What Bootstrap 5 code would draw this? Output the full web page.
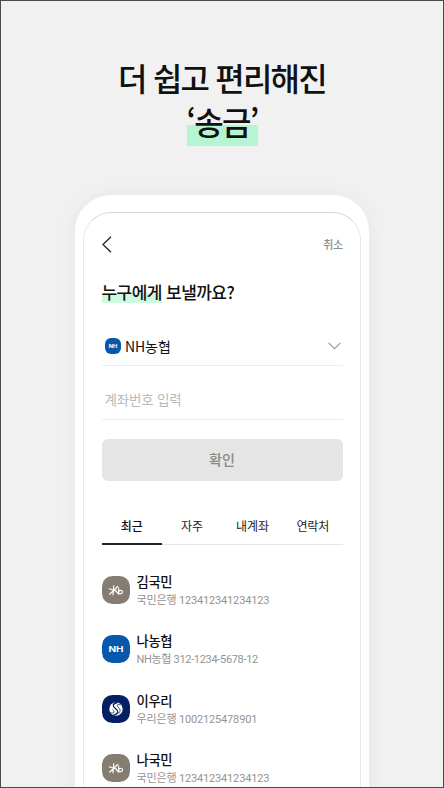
<!DOCTYPE html>
<html lang="ko">
<head>
<meta charset="utf-8">
<meta name="viewport" content="width=device-width, initial-scale=1">
<title>송금</title>
<link href="https://cdn.jsdelivr.net/npm/bootstrap@5.3.0/dist/css/bootstrap.min.css" rel="stylesheet">
<style>
body{font-family:"Noto Sans CJK KR",sans-serif;background:#f1f1f1;color:#111;}
.stage{height:788px;border:1px solid #4b494b;background:#f1f1f1;}
.hero{padding-top:54px;height:194px;font-size:32px;line-height:44px;font-weight:500;letter-spacing:-1.8px;color:#111;}
.hero-mark{background:linear-gradient(#b5f5d3,#b5f5d3) 0 25px/100% 21px no-repeat;display:inline-block;width:71px;height:46px;line-height:42px;white-space:nowrap;}
.phone{width:294px;height:640px;border-radius:36px;background:#fff;padding:17px 8px 0;margin-left:74px;box-shadow:0 2px 24px rgba(0,0,0,.05);}
.screen{height:640px;border:1px solid #e8e8e8;border-top-color:#d6d6d6;border-radius:28px;padding:0 17px 0 17.5px;}
.top-row{height:62px;}
.cancel{font-size:11px;font-weight:500;color:#8b8b8b;letter-spacing:-.2px;}
.question{height:36px;font-size:17px;font-weight:500;line-height:34px;letter-spacing:-.55px;color:#111;}
.question-mark{background:linear-gradient(#cdf9e0,#cdf9e0) 0 18px/100% 10px no-repeat;display:inline-block;}
.bank{height:37px;margin-top:18px;border-bottom:1px solid #ededed;font-size:14px;color:#111;padding:0 2px 2px 3.5px;}
.bank-name{letter-spacing:-.1px;}
.account{height:54px;border-bottom:1px solid #ededed;font-size:13.5px;line-height:20px;letter-spacing:-.2px;color:#b9b9b9;padding:23px 3px 0;}
.confirm{height:42px;margin-top:19px;border-radius:6px;background:#e5e5e5;color:#888;font-size:14px;font-weight:500;border:0;padding:0 0 2px;width:241px;}
.tabs-row{height:36px;margin-top:28px;border-bottom:1px solid #e6e6e6;font-size:12px;letter-spacing:-.1px;}
.tab-item{flex:1 1 0;height:36px;line-height:33px;color:#222;text-align:center;}
.tab-on{border-bottom:2px solid #262626;font-weight:500;color:#111;}
.person{height:59.5px;}
.person-body{margin-left:7px;padding-top:4px;}
.person-name{font-size:13.3px;line-height:18px;font-weight:500;color:#111;letter-spacing:-.3px;}
.person-acct{font-family:Roboto,"Noto Sans CJK KR",sans-serif;font-size:11px;line-height:20px;color:#949494;white-space:nowrap;letter-spacing:-.16px;}
.acct-tight{letter-spacing:-.32px;}
.people{padding-top:15px;}
</style>
<script src="https://cdn.jsdelivr.net/npm/bootstrap@5.3.0/dist/js/bootstrap.bundle.min.js"></script>
</head>
<body>
<svg width="0" height="0" class="d-none">
<symbol id="kb" viewBox="0 0 28 28"><rect width="28" height="28" rx="10.5" fill="#867d72"/><g fill="none" stroke="#fff" stroke-width="1.2" stroke-linecap="round"><path d="M7.200 12.800 14.500 15M11.800 9.800 11 18.800M7.600 18.200 15.800 10.500M12.600 13.800l4 4.400M16.600 12.200v5.200M16.900 15.300c1.500-1.400 3.900-.9 3.700.7-.2 1.700-2.700 2.100-4 1.300"/></g></symbol>
<symbol id="nh" viewBox="0 0 28 28"><rect width="28" height="28" rx="10.5" fill="#0658ab"/><text x="14" y="17" text-anchor="middle" textLength="15" lengthAdjust="spacingAndGlyphs" font-family="Inter,sans-serif" font-weight="700" font-size="8" fill="#fff">NH</text></symbol>
<symbol id="woori" viewBox="0 0 28 28"><rect width="28" height="28" rx="10.5" fill="#051f65"/><circle cx="14" cy="14" r="6.700" fill="#fff"/><g fill="none" stroke="#051f65" stroke-linecap="round"><path stroke-width="1.300" d="M15.200 7.500c-5 1.400-5 3.500-1.500 6.200 3.500 2.600 3 4.700-2 6.700"/><path stroke-width=".8" d="M18.500 9.800c-3-1.300-4.500.3-2 2.700 2.600 2.300 1.800 4.700-.5 6.200M8.800 17.600c3 1.300 4.600-.3 2.100-2.700"/></g></symbol>
</svg>
<main class="stage overflow-hidden">
<h1 class="hero text-center mb-0">더 쉽고 편리해진<br><span class="hero-mark">‘송금’</span></h1>
<section class="phone">
<div class="screen">
<div class="top-row d-flex justify-content-between align-items-center">
<svg width="11" height="17" viewBox="0 0 11 17" fill="none" stroke="#222" stroke-width="1.3"><path d="M9 .8 1 8.500l8 7.700"/></svg>
<span class="cancel">취소</span>
</div>
<div class="question"><span class="question-mark">누구에게</span> 보낼까요?</div>
<div class="bank d-flex align-items-center">
<svg width="16" height="16"><use href="#nh"/></svg><span class="bank-name ms-1 flex-grow-1">NH농협</span>
<svg width="13" height="8" viewBox="0 0 13 8" fill="none" stroke="#999" stroke-width="1.100"><path d="M.6.9 6.500 6.700 12.400.9"/></svg>
</div>
<div class="account">계좌번호 입력</div>
<button class="confirm d-block" type="button">확인</button>
<div class="tabs-row d-flex"><div class="tab-item tab-on">최근</div><div class="tab-item">자주</div><div class="tab-item">내계좌</div><div class="tab-item">연락처</div></div>
<div class="people">
<div class="person d-flex align-items-center"><svg width="28" height="28"><use href="#kb"/></svg><div class="person-body"><div class="person-name">김국민</div><div class="person-acct">국민은행 123412341234123</div></div></div>
<div class="person d-flex align-items-center"><svg width="28" height="28"><use href="#nh"/></svg><div class="person-body"><div class="person-name">나농협</div><div class="person-acct acct-tight">NH농협 312-1234-5678-12</div></div></div>
<div class="person d-flex align-items-center"><svg width="28" height="28"><use href="#woori"/></svg><div class="person-body"><div class="person-name">이우리</div><div class="person-acct">우리은행 1002125478901</div></div></div>
<div class="person d-flex align-items-center"><svg width="28" height="28"><use href="#kb"/></svg><div class="person-body"><div class="person-name">나국민</div><div class="person-acct">국민은행 123412341234123</div></div></div>
</div>
</div>
</section>
</main>
</body>
</html>
